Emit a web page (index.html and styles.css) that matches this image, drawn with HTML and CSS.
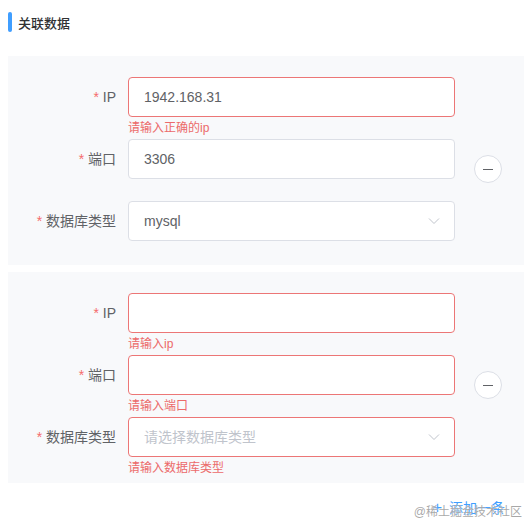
FILE: index.html
```html
<!DOCTYPE html>
<html lang="zh">
<head>
<meta charset="utf-8">
<link rel="stylesheet" href="styles.css">
</head>
<body>
<div class="page">
  <div class="title"><span class="bar"></span><span class="title-text">关联数据</span></div>

  <div class="group">
    <div class="form">
      <div class="item">
        <label class="label"><span class="req">*</span> IP</label>
        <div class="control">
          <div class="input is-error">1942.168.31</div>
          <div class="err">请输入正确的ip</div>
        </div>
      </div>
      <div class="item">
        <label class="label"><span class="req">*</span> 端口</label>
        <div class="control">
          <div class="input">3306</div>
        </div>
      </div>
      <div class="item">
        <label class="label"><span class="req">*</span> 数据库类型</label>
        <div class="control">
          <div class="input select">mysql<svg class="arrow" width="12" height="12" viewBox="0 0 12 12"><path d="M1 3.5 L6 8.5 L11 3.5" fill="none" stroke="#c0c4cc" stroke-width="1"/></svg></div>
        </div>
      </div>
    </div>
    <div class="side"><span class="minus"><span class="minus-line"></span></span></div>
  </div>

  <div class="group group-last">
    <div class="form">
      <div class="item">
        <label class="label"><span class="req">*</span> IP</label>
        <div class="control">
          <div class="input is-error"></div>
          <div class="err">请输入ip</div>
        </div>
      </div>
      <div class="item">
        <label class="label"><span class="req">*</span> 端口</label>
        <div class="control">
          <div class="input is-error"></div>
          <div class="err">请输入端口</div>
        </div>
      </div>
      <div class="item">
        <label class="label"><span class="req">*</span> 数据库类型</label>
        <div class="control">
          <div class="input select is-error"><span class="placeholder">请选择数据库类型</span><svg class="arrow" width="12" height="12" viewBox="0 0 12 12"><path d="M1 3.5 L6 8.5 L11 3.5" fill="none" stroke="#c0c4cc" stroke-width="1"/></svg></div>
          <div class="err">请输入数据库类型</div>
        </div>
      </div>
    </div>
    <div class="side"><span class="minus"><span class="minus-line"></span></span></div>
  </div>

  <div class="footer">
    <span class="add"><span class="plus">+</span>添加一条</span>
    <span class="watermark">@稀土掘金技术社区</span>
  </div>
</div>
</body>
</html>
```

FILE: styles.css
```css
* { box-sizing: border-box; }
html, body {
  margin: 0;
  padding: 0;
  background: #ffffff;
}
body {
  font-family: "Liberation Sans", "Noto Sans CJK SC", sans-serif;
  color: #606266;
  font-size: 14px;
}
.page {
  width: 532px;
  padding: 0 8px;
}
.title {
  display: flex;
  align-items: center;
  height: 20px;
  margin-top: 12px;
  margin-bottom: 24px;
}
.bar {
  width: 4px;
  height: 20px;
  background: #409eff;
  border-radius: 2px;
  margin-right: 6px;
}
.title-text {
  font-size: 13px;
  color: #303133;
  font-weight: 500;
}
.group {
  display: flex;
  background: #f8f9fb;
  padding: 21px 0 2px;
  margin-bottom: 7px;
}
.group-last {
  padding-bottom: 4px;
}
.form {
  width: 447px;
}
.item {
  display: flex;
  height: 40px;
  margin-bottom: 22px;
}
.label {
  width: 120px;
  padding-right: 12px;
  text-align: right;
  line-height: 40px;
  font-size: 14px;
  color: #606266;
}
.req {
  color: #f56c6c;
}
.control {
  position: relative;
  width: 327px;
}
.input {
  height: 40px;
  line-height: 38px;
  border: 1px solid #dcdfe6;
  border-radius: 4px;
  background: #ffffff;
  padding: 0 15px;
  font-size: 14px;
  color: #606266;
}
.input.is-error {
  border-color: #ec7676;
}
.select {
  display: flex;
  align-items: center;
  justify-content: space-between;
  padding-right: 14px;
}
.placeholder {
  color: #c0c4cc;
}
.arrow {
  display: block;
}
.err {
  position: absolute;
  left: 0;
  top: 100%;
  padding-top: 5px;
  font-size: 12px;
  line-height: 1;
  color: #ec6a6a;
}
.side {
  padding-left: 19px;
  padding-top: 78px;
}
.minus {
  display: flex;
  align-items: center;
  justify-content: center;
  width: 28px;
  height: 28px;
  border: 1px solid #dcdfe6;
  border-radius: 50%;
  background: #ffffff;
}
.minus-line {
  width: 10px;
  height: 1px;
  background: #606266;
}
.footer {
  position: relative;
  display: flex;
  justify-content: flex-end;
  padding-right: 19px;
  margin-top: 15px;
  height: 20px;
}
.add {
  display: flex;
  align-items: center;
  color: #409eff;
  font-size: 14px;
  line-height: 20px;
}
.plus {
  font-size: 16px;
  font-weight: 300;
  margin-right: 7px;
}
.watermark {
  position: absolute;
  right: 2px;
  top: 7px;
  font-size: 12px;
  line-height: 14px;
  color: rgba(140, 140, 140, 0.75);
  text-shadow: 0 0 1px #ffffff;
}
```
